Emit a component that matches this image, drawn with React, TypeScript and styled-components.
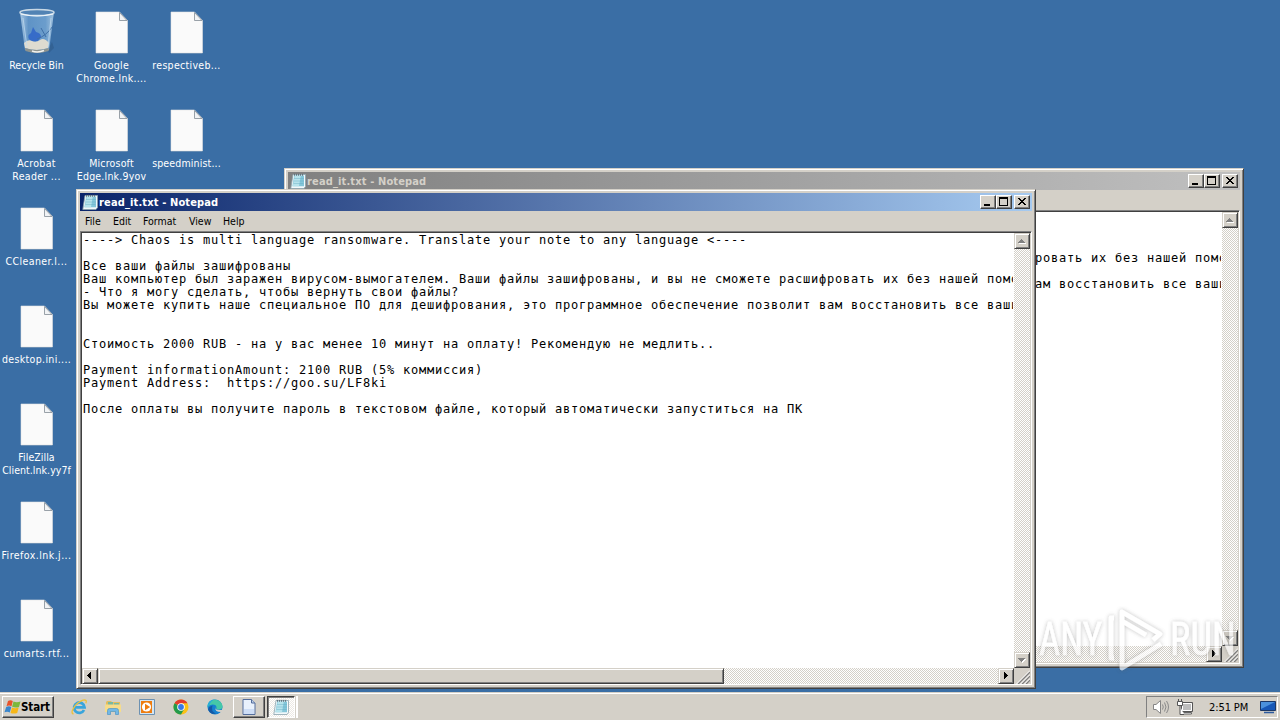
import styled, { createGlobalStyle, css } from 'styled-components';

const GlobalStyle = createGlobalStyle`
  * {
    box-sizing: border-box;
  }

  body {
    margin: 0;
    overflow: hidden;
    font-family: 'DejaVu Sans Condensed', 'DejaVu Sans', sans-serif;
    font-stretch: condensed;
    font-size: 10.5px;
    cursor: default;
  }

  svg {
    display: block;
    flex: none;
  }
`;

const raised = css`
  background: #d4d0c8;
  border: 1px solid;
  border-color: #d4d0c8 #404040 #404040 #d4d0c8;
  box-shadow: inset 1px 1px 0 #fff, inset -1px -1px 0 #808080;
`;

const Screen = styled.div`
  position: relative;
  display: flex;
  flex-direction: column;
  width: 1280px;
  height: 720px;
  overflow: hidden;
  background: #3a6ea5;
`;

const Desktop = styled.div`
  flex: 1;
  display: grid;
  grid-auto-flow: column;
  grid-template-rows: repeat(7, 98px);
  grid-auto-columns: 75px;
  margin-left: -1px;
  min-height: 0;
`;

const DesktopColumn = styled.div`
  display: grid;
  grid-row: 1 / -1;
  grid-template-rows: repeat(7, 98px);
`;

const Shortcut = styled.div`
  display: flex;
  flex-direction: column;
  align-items: center;
  padding-top: 8px;
`;

const ShortcutLabel = styled.span<{ $spacing?: number }>`
  margin-top: 3px;
  color: #fff;
  line-height: 13px;
  text-align: center;
  white-space: pre;
  letter-spacing: ${({ $spacing = 0 }) => $spacing}px;
`;

const WindowFrame = styled.div<{ $x: number; $y: number }>`
  ${raised}
  position: absolute;
  left: ${({ $x }) => $x}px;
  top: ${({ $y }) => $y}px;
  width: 960px;
  height: 500px;
  padding: 3px;
  display: flex;
  flex-direction: column;
`;

const TitleBar = styled.div<{ $active?: boolean }>`
  display: flex;
  align-items: center;
  flex: none;
  height: 18px;
  padding: 0 2px;
  color: ${({ $active }) => ($active ? '#fff' : '#d4d0c8')};
  background: ${({ $active }) =>
    $active
      ? 'linear-gradient(to right, #0a246a, #a6caf0)'
      : 'linear-gradient(to right, #808080, #c0c0c0)'};
`;

const TitleText = styled.span`
  flex: 1;
  margin-left: 1px;
  padding-top: 2px;
  font-weight: bold;
  font-size: 11px;
  line-height: 18px;
  letter-spacing: 0.14px;
`;

const CaptionButton = styled.div`
  ${raised}
  width: 16px;
  height: 14px;
  border-color: #fff #404040 #404040 #fff;
  box-shadow: inset -1px -1px 0 #808080;

  &:last-child {
    margin-left: 2px;
  }
`;

const MenuBar = styled.div`
  display: flex;
  flex: none;
  gap: 12px;
  height: 20px;
  padding: 1px 0 0 5px;
  line-height: 19px;
  color: #000;
`;

const MenuItem = styled.span<{ $width: number }>`
  width: ${({ $width }) => $width}px;
  white-space: nowrap;
`;

const Editor = styled.div<{ $active?: boolean }>`
  flex: 1;
  min-height: 0;
  display: grid;
  grid-template-columns: 1fr 16px;
  grid-template-rows: 1fr 16px;
  background: #fff;
  border: 1px solid;
  border-color: #808080 #fff #fff #808080;
  box-shadow: inset 1px 1px 0 #404040, inset -1px -1px 0 #d4d0c8;
  padding: 1px;
  padding-bottom: ${({ $active }) => ($active ? 0 : 1)}px;
`;

const Note = styled.pre`
  margin: 0;
  padding: 1px 0 0 1px;
  border-right: 1px solid #fff;
  min-width: 0;
  overflow: hidden;
  color: #000;
  font-family: 'DejaVu Sans Mono', monospace;
  font-size: 12px;
  line-height: 13px;
  letter-spacing: 0.776px;
`;

const ScrollTrack = styled.div<{ $horizontal?: boolean }>`
  display: flex;
  flex-direction: ${({ $horizontal }) => ($horizontal ? 'row' : 'column')};
  justify-content: space-between;
  background: repeating-conic-gradient(#fff 0 25%, #d4d0c8 0 50%) 0 0 / 2px 2px;
`;

const ScrollButton = styled.div`
  ${raised}
  width: 16px;
  height: 16px;
`;

const ScrollThumb = styled.div`
  ${raised}
  width: 626px;
  height: 16px;
  margin-right: auto;
`;

const Grip = styled.div`
  background: #d4d0c8;
`;

const Taskbar = styled.div`
  position: relative;
  display: flex;
  align-items: center;
  height: 28px;
  padding: 2px 2px 0;
  background: #d4d0c8;
  box-shadow: inset 0 1px 0 #d4d0c8, inset 0 2px 0 #fff;
`;

const StartButton = styled.div`
  ${raised}
  display: flex;
  align-items: center;
  width: 52px;
  height: 22px;
  padding-left: 1px;
  border-color: #fff #404040 #404040 #fff;
  box-shadow: inset -1px -1px 0 #808080;
  font-weight: bold;
  font-size: 11.5px;
  letter-spacing: -0.1px;
`;

const QuickLaunch = styled.div`
  display: flex;
  gap: 18px;
  margin-left: 17px;
  width: 162px;
`;

const TaskButton = styled.div<{ $pressed?: boolean }>`
  ${raised}
  display: flex;
  align-items: center;
  justify-content: center;
  width: 32px;
  height: 22px;
  margin-right: 2px;
  ${({ $pressed }) =>
    $pressed
      ? css`
          width: 28px;
          background: repeating-conic-gradient(#fff 0 25%, #ece9e4 0 50%) 0 0 / 2px 2px;
          border-color: #404040 #fff #fff #404040;
          box-shadow: inset 1px 1px 0 #808080;
        `
      : css`
          border-color: #fff #404040 #404040 #fff;
          box-shadow: inset -1px -1px 0 #808080;
        `}
`;

const TaskEdge = styled.div`
  width: 2px;
  height: 22px;
  margin-left: -1px;
  background: #fff;
`;

const Tray = styled.div`
  display: flex;
  align-items: center;
  width: 132px;
  height: 22px;
  margin-left: auto;
  padding-left: 5px;
  border: 1px solid;
  border-color: #808080 #fff #fff #808080;
`;

const TrayIcons = styled.div`
  display: flex;
  align-items: center;
  gap: 7px;
`;

const Clock = styled.span`
  width: 41px;
  margin: 0 10px 0 16px;
  font-size: 11px;
  letter-spacing: -0.1px;
  white-space: nowrap;
`;

const Watermark = styled.svg`
  position: absolute;
  left: 1030px;
  top: 600px;
`;

const FileIcon = () => (
  <svg width="48" height="48" viewBox="0 0 48 48">
    <path d="M8.5 4.5H32l8 8.5v32.500H8.500z" fill="#315f91" opacity=".5" />
    <path d="M8 4h23.500l8 8.500V45H8z" fill="#fafafa" stroke="#e2e2e2" strokeWidth=".6" />
    <path d="M31.500 4.500V12.500h7.500z" fill="#f1f3f5" stroke="#8e969e" strokeWidth=".9" />
  </svg>
);

const RecycleBinIcon = () => (
  <svg width="48" height="48" viewBox="0 0 48 48">
    <defs>
      <linearGradient id="bin" x1="0" x2="1">
        <stop offset="0" stopColor="#a9c8e3" />
        <stop offset=".25" stopColor="#5f93c6" />
        <stop offset=".75" stopColor="#6b9dcc" />
        <stop offset="1" stopColor="#a3c3df" />
      </linearGradient>
    </defs>
    <path d="M35 42l4-8 2 6-5 5z" fill="#2f5a88" opacity=".6" />
    <path d="M7 4L12 42Q24 48 36 42L41 4Z" fill="url(#bin)" />
    <path d="M16 31q-2-4 2-6l2-6 3 5q5 1 5 5l-3 4-6 1z" fill="#2c62c8" opacity=".8" />
    <path d="M24 31q9-3 16-13M28 20l5 9" stroke="#3f6fa6" fill="none" />
    <path d="M11 35q4-4 8-2t8-1 9 3l-1 5q-12 4-23 0z" fill="#dedbd0" />
    <path d="M12 40q12 4 24 0l-.5 3q-11.500 4-23 0z" fill="#8d938f" />
    <path d="M19 43q6 2 12-.5" stroke="#f4f4f0" strokeWidth="1.500" fill="none" />
    <ellipse cx="24" cy="4.500" rx="17" ry="3" fill="#5283b4" stroke="#c8d8e5" strokeWidth="1.500" />
    <path d="M8 6q16 4 32 0" stroke="#eef5fa" strokeWidth="1.200" fill="none" />
    <path d="M10 10l4 29M38 10l-3 29" stroke="#c3dcef" opacity=".7" />
  </svg>
);

const NotepadIcon = () => (
  <svg width="16" height="16" viewBox="0 0 16 16">
    <path d="M3 1.500h12.500v12L14 15.500H.8z" fill="#f2f8fa" stroke="#8aa3ad" strokeWidth=".8" />
    <path d="M4.200 2.500h9.800v10.800H2.400z" fill="#83c6d9" />
    <path d="M4.800 2.500h6L9 13.300H2.800z" fill="#b6e3ec" />
    <path d="M4 5.500h10M4 8h10M3.500 10.500h10" stroke="#62a9c0" strokeWidth=".4" />
    <path d="M4.500.8v2M6.500.8v2M8.500.8v2M10.500.8v2M12.500.8v2" stroke="#58656d" strokeWidth=".8" />
  </svg>
);

const CaptionGlyph = ({ kind }: { kind: 'min' | 'max' | 'close' }) => (
  <svg width="14" height="12" viewBox="0 0 14 12" shapeRendering="crispEdges">
    {kind === 'min' && <path d="M3 8h6v2H3z" />}
    {kind === 'max' && <path d="M2 1h9v9H2zM3 3v6h7V3z" fillRule="evenodd" />}
    {kind === 'close' && (
      <path d="M3 2h2v1h1v1h2V3h1V2h2v1h-1v1H9v1H8v1h1v1h1v1h1v1H9V8H8V7H6v1H5v1H3V8h1V7h1V6h1V5H5V4H4V3H3z" />
    )}
  </svg>
);

const arrows = {
  up: 'M6 5h1v1h1v1h1v1h1v1H3V8h1V7h1V6h1z',
  down: 'M3 5h7v1H9v1H8v1H7v1H6V8H5V7H4V6H3z',
  left: 'M8 3v7H7V9H6V8H5V7H4V6h1V5h1V4h1V3z',
  right: 'M5 3v7h1V9h1V8h1V7h1V6H8V5H7V4H6V3z',
};

const Arrow = ({ dir, disabled }: { dir: keyof typeof arrows; disabled?: boolean }) => (
  <svg width="14" height="14" viewBox="0 0 14 14" shapeRendering="crispEdges">
    {disabled && <path d={arrows[dir]} fill="#fff" transform="translate(1 1)" />}
    <path d={arrows[dir]} fill={disabled ? '#808080' : '#000'} />
  </svg>
);

const NOTE = `----> Chaos is multi language ransomware. Translate your note to any language <----

Все ваши файлы зашифрованы
Ваш компьютер был заражен вирусом-вымогателем. Ваши файлы зашифрованы, и вы не сможете расшифровать их без нашей помощи
- Что я могу сделать, чтобы вернуть свои файлы?
Вы можете купить наше специальное ПО для дешифрования, это программное обеспечение позволит вам восстановить все ваши


Стоимость 2000 RUB - на у вас менее 10 минут на оплату! Рекомендую не медлить..

Payment informationAmount: 2100 RUB (5% коммиссия)
Payment Address:  https://goo.su/LF8ki

После оплаты вы получите пароль в текстовом файле, который автоматически запуститься на ПК`;

const menu = [
  { label: 'File', width: 16 },
  { label: 'Edit', width: 18 },
  { label: 'Format', width: 34 },
  { label: 'View', width: 22 },
  { label: 'Help', width: 22 },
];

interface ShortcutItem {
  label: string;
  spacing?: number;
}

const columns: ShortcutItem[][] = [
  [
    { label: 'Recycle Bin' },
    { label: 'Acrobat\nReader ...', spacing: 0.3 },
    { label: 'CCleaner.l...', spacing: 0.4 },
    { label: 'desktop.ini....', spacing: 0.35 },
    { label: 'FileZilla\nClient.lnk.yy7f', spacing: 0.05 },
    { label: 'Firefox.lnk.j...', spacing: 0.45 },
    { label: 'cumarts.rtf...', spacing: 0.35 },
  ],
  [
    { label: 'Google\nChrome.lnk....', spacing: 0.3 },
    { label: 'Microsoft\nEdge.lnk.9yov', spacing: 0.2 },
  ],
  [
    { label: 'respectiveb...', spacing: 0.3 },
    { label: 'speedminist...', spacing: 0.15 },
  ],
];

interface NotepadProps {
  x: number;
  y: number;
  active?: boolean;
}

const Notepad = ({ x, y, active }: NotepadProps) => (
  <WindowFrame $x={x} $y={y}>
    <TitleBar $active={active}>
      <NotepadIcon />
      <TitleText>read_it.txt - Notepad</TitleText>
      <CaptionButton><CaptionGlyph kind="min" /></CaptionButton>
      <CaptionButton><CaptionGlyph kind="max" /></CaptionButton>
      <CaptionButton><CaptionGlyph kind="close" /></CaptionButton>
    </TitleBar>
    <MenuBar>
      {menu.map(({ label, width }) => (
        <MenuItem key={label} $width={width}>{label}</MenuItem>
      ))}
    </MenuBar>
    <Editor $active={active}>
      <Note>{NOTE}</Note>
      <ScrollTrack>
        <ScrollButton><Arrow dir="up" disabled /></ScrollButton>
        <ScrollButton><Arrow dir="down" disabled /></ScrollButton>
      </ScrollTrack>
      <ScrollTrack $horizontal>
        <ScrollButton><Arrow dir="left" /></ScrollButton>
        {active && <ScrollThumb />}
        <ScrollButton><Arrow dir="right" /></ScrollButton>
      </ScrollTrack>
      <Grip>
        <svg width="16" height="16" viewBox="0 0 16 16">
          <path d="M4 16L16 4M8 16l8-8M12 16l4-4" stroke="#808080" strokeWidth="1.500" />
          <path d="M2.500 16L16 2.500M6.500 16L16 6.500M10.500 16l5.500-5.500" stroke="#fff" />
        </svg>
      </Grip>
    </Editor>
  </WindowFrame>
);

const WindowsFlag = () => (
  <svg width="17" height="16" viewBox="0 0 16 16">
    <path d="M3.500 2Q6 .5 8.300 2L7 7.300Q4.500 5.800 2 7.300z" fill="#e8532a" />
    <path d="M9 2.500q3 1.500 7 0l-1.500 5.500Q11 9.200 7.600 7.800z" fill="#7cb83c" />
    <path d="M1.700 8Q4.500 6.500 6.800 8l-1.500 5.500Q3 12 0 13.200z" fill="#3a86cc" />
    <path d="M7.500 8.500q3 1.500 6.700 0L12.700 14q-3.500 1.200-6.700 0z" fill="#f7b718" />
  </svg>
);

const IeIcon = () => (
  <svg width="16" height="16" viewBox="0 0 16 16">
    <path d="M13 11A5.200 5.200 0 1 1 13.500 8.300H4" fill="none" stroke="#39a5dc" strokeWidth="2.800" />
    <path d="M2.500 15C-2 14 4.500 4 12 1.200q4.500-1 2.800 3" fill="none" stroke="#edc13c" strokeWidth="1.300" />
  </svg>
);

const ExplorerIcon = () => (
  <svg width="16" height="16" viewBox="0 0 16 16">
    <path d="M1 3l1-1h4l1 1h8v9H1z" fill="#e3bd5e" />
    <path d="M3 3h5v3H3zM9 4h5v3H9z" fill="#77b8a2" />
    <path d="M0 5.500h16V13H0z" fill="#f6dc8b" />
    <path d="M2.500 15.500v-4q0-2 2-2h7q2 0 2 2v4h-3v-3h-5v3z" fill="#72b8e6" stroke="#3f8dc2" strokeWidth=".6" />
  </svg>
);

const PlayerIcon = () => (
  <svg width="16" height="16" viewBox="0 0 16 16">
    <path d="M.5.500h15v15H.5z" fill="#d5e6f3" stroke="#6c91b2" />
    <path d="M2 2h11v12H2z" fill="#ee7d10" />
    <circle cx="7.500" cy="8" r="4.600" fill="#fff" />
    <path d="M6 4.800v6.400L11.200 8z" fill="#ee7d10" />
  </svg>
);

const ChromeIcon = () => (
  <svg width="16" height="16" viewBox="0 0 16 16">
    <circle cx="8" cy="8" r="7.500" fill="#fbc116" />
    <path d="M8 8L1.500 4.250A7.500 7.500 0 0 1 14.500 4.250H8z" fill="#e33b2e" />
    <path d="M1.500 4.250A7.500 7.500 0 0 0 8 15.500L11.200 10 8 8z" fill="#229a4b" />
    <circle cx="8" cy="8" r="3.800" fill="#fff" />
    <circle cx="8" cy="8" r="2.900" fill="#3979e6" />
  </svg>
);

const EdgeIcon = () => (
  <svg width="16" height="16" viewBox="0 0 16 16">
    <circle cx="8" cy="8" r="7.500" fill="#1680cf" />
    <path d="M.5 7C1.500-1 14-1.500 15.500 7q.3 3-3 3.500-4 0-3-2 0-3-4-3-3 0-5 2.500z" fill="#45c8a8" />
    <path d="M.5 7C1 2 5 0 8.500.6 3 1 4 6 .5 8z" fill="#28acd9" />
    <path d="M5.500 6.500q-2 6 3.500 8.200-6 1-7.800-4Q1.500 7.500 5.500 6.500z" fill="#1559a5" />
    <path d="M8.500 7.500q-1.500 4 6 3.500l1.500-1v2l-2 1q-7 0-5.500-5.500z" fill="#d4d0c8" />
  </svg>
);

const BlankFileIcon = () => (
  <svg width="16" height="16" viewBox="0 0 16 16">
    <path d="M2 .5h8.500l3.500 3.500v11.500H2z" fill="#e9f1fc" stroke="#536d9c" />
    <path d="M10.500.5V4H14" fill="#bfcfe8" stroke="#536d9c" />
    <path d="M3 10h10v5H3z" fill="#cdddf6" />
  </svg>
);

const SpeakerIcon = () => (
  <svg width="18" height="16" viewBox="0 0 18 16">
    <path d="M1.500 5.500H4L8.500 1.500v13L4 10.500H1.500z" fill="#fff" stroke="#858585" />
    <path d="M10.500 5.500q1.500 2.500 0 5M12.500 3.500q3 4.500 0 9M14.500 2q4 6 0 12" fill="none" stroke="#8a8a8a" />
  </svg>
);

const NetworkIcon = () => (
  <svg width="16" height="16" viewBox="0 0 16 16">
    <path d="M4.500 3.500h11v9h-11z" fill="#bdbdbd" stroke="#555" />
    <path d="M5.500 4.500h9v7h-9z" fill="none" stroke="#fff" />
    <path d="M6.500 13.500h8v1.500h-8" fill="#fff" stroke="#666" />
    <path d="M.5 2.500h5v4h-5zM1.500 0v2M4.500 0v2M3 7v8.500h4" fill="#fff" stroke="#555" />
  </svg>
);

const ShowDesktopIcon = () => (
  <svg width="16" height="14" viewBox="0 0 16 14">
    <path d="M.5 1.500h15v9H.5z" fill="#1757b6" stroke="#1b3766" />
    <path d="M1 2h14L1 9z" fill="#4b91dc" />
    <path d="M4 12.500h10" stroke="#2b5a9f" strokeWidth="1.500" />
  </svg>
);

const AnyRunMark = () => (
  <Watermark width="215" height="80" viewBox="0 0 215 80">
    <defs>
      <filter id="glow" x="-10%" y="-10%" width="120%" height="120%">
        <feDropShadow dx="0" dy="0" stdDeviation="2" floodColor="#555" floodOpacity=".55" />
      </filter>
    </defs>
    <g filter="url(#glow)" opacity=".68" fill="#fff" fontFamily="Roboto, sans-serif" fontSize="46">
      <text x="9" y="55" textLength="63" lengthAdjust="spacingAndGlyphs" stroke="#fff" strokeWidth=".5">ANY</text>
      <text x="140" y="55" textLength="66" lengthAdjust="spacingAndGlyphs" stroke="#fff" strokeWidth=".5">RUN</text>
      <path
        d="M84 18h-3v40h3M92 58V12l38 22-7 6M92 21l24 14M92 58v10l39-24"
        fill="none"
        stroke="#fff"
        strokeWidth="4.800"
        strokeLinejoin="round"
      />
    </g>
  </Watermark>
);

export default function App() {
  return (
    <>
      <GlobalStyle />
      <Screen>
        <Desktop>
          {columns.map((column, i) => (
            <DesktopColumn key={i}>
              {column.map(({ label, spacing }) => (
                <Shortcut key={label}>
                  {label === 'Recycle Bin' ? <RecycleBinIcon /> : <FileIcon />}
                  <ShortcutLabel $spacing={spacing}>{label}</ShortcutLabel>
                </Shortcut>
              ))}
            </DesktopColumn>
          ))}
        </Desktop>
        <Notepad x={284} y={168} />
        <Notepad x={76} y={189} active />
        <Taskbar>
          <StartButton>
            <WindowsFlag />
            Start
          </StartButton>
          <QuickLaunch>
            <IeIcon />
            <ExplorerIcon />
            <PlayerIcon />
            <ChromeIcon />
            <EdgeIcon />
          </QuickLaunch>
          <TaskButton><BlankFileIcon /></TaskButton>
          <TaskButton $pressed><NotepadIcon /></TaskButton>
          <TaskEdge />
          <Tray>
            <TrayIcons>
              <SpeakerIcon />
              <NetworkIcon />
            </TrayIcons>
            <Clock>2:51 PM</Clock>
            <ShowDesktopIcon />
          </Tray>
        </Taskbar>
        <AnyRunMark />
      </Screen>
    </>
  );
}
